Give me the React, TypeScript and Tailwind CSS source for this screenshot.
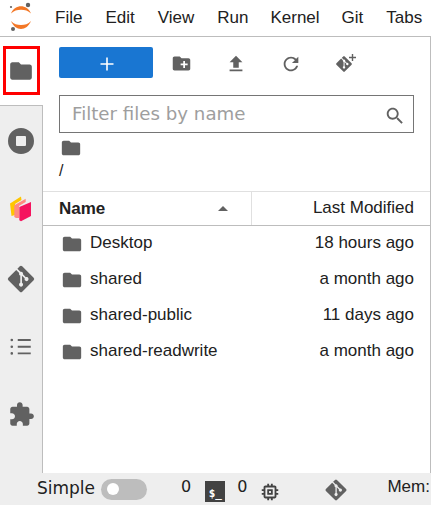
import React from "react";
import { FaGitAlt } from "react-icons/fa";

const FOLDER = "M10 4H4c-1.1 0-1.99.9-1.99 2L2 18c0 1.1.9 2 2 2h16c1.1 0 2-.9 2-2V8c0-1.1-.9-2-2-2h-8l-2-2z";

function Mat({ d, size = 24, className = "" }: { d: string; size?: number; className?: string }) {
  return (
    <svg width={size} height={size} viewBox="0 0 24 24" className={`shrink-0 fill-[#616161] ${className}`}>
      <path d={d} />
    </svg>
  );
}

function Logo() {
  return (
    <svg width="32" height="34" viewBox="0 0 32 34" className="shrink-0">
      <path d="M3 12.500C5 7.500 9 5.200 13 5.200s8 2.300 10 7.300C20 9.800 17 8.800 13 8.800S6 9.800 3 12.500z" fill="#f37726" />
      <path d="M3 20C6 23 9 24 13 24s7-1 10-4C21 25 17 28 13 28S5 25 3 20z" fill="#f37726" />
      <circle cx="20" cy="4" r="2.200" fill="#616161" />
      <circle cx="3" cy="6" r="1.100" fill="#616161" />
      <circle cx="5" cy="28" r="2" fill="#616161" />
    </svg>
  );
}

function Wandb() {
  return (
    <svg width="22" height="27" viewBox="0 0 22 27">
      <path d="M0 7.500 11 .5l.5 3.500L5 8v11l-3.500 1z" fill="#ffc600" />
      <path d="M4.300 9.300 15.700 2.700V6L9 10v12H6l-1.700-1z" fill="#ff8a80" />
      <path d="M9.300 11 21 6v14l-10 5.300-1.700-1z" fill="#f5145f" />
    </svg>
  );
}

function SideTab({ children, active }: { children: React.ReactNode; active?: boolean }) {
  return (
    <div
      className={
        active
          ? "h-[69px] w-[43px] bg-white flex items-center justify-center border-b border-[#bdbdbd]"
          : "h-[69px] w-[43px] flex items-center justify-center border-r border-[#bdbdbd]"
      }
    >
      {children}
    </div>
  );
}

function Row({ name, time }: { name: string; time: string }) {
  return (
    <div className="h-9 flex items-center pl-[2px] text-[17px] text-[#212121]">
      <Mat d={FOLDER} size={22} />
      <span className="ml-[7px] -mt-[3px]">{name}</span>
      <span className="ml-auto -mt-[3px]">{time}</span>
    </div>
  );
}

export default function App() {
  const menu: [string, string][] = [
    ["File", ""],
    ["Edit", "ml-[23px]"],
    ["View", "ml-[23px]"],
    ["Run", "ml-[23px]"],
    ["Kernel", "ml-[22px]"],
    ["Git", "ml-[22px]"],
    ["Tabs", "ml-[23px]"],
  ];
  return (
    <div className="relative w-[431px] h-[505px] overflow-hidden flex flex-col bg-white font-['Liberation_Sans',sans-serif]">
      <header className="h-[37px] shrink-0 flex items-center border-b border-[#bdbdbd] pl-[8px]">
        <Logo />
        <nav className="flex text-[17px] text-[#212121] -mt-[1px] ml-[15px]">
          {menu.map(([m, c]) => (
            <span key={m} className={c}>{m}</span>
          ))}
        </nav>
      </header>

      <div className="flex-1 flex min-h-0">
        <aside className="w-[43px] shrink-0 bg-[#eeeeee] flex flex-col">
          <SideTab active><Mat d={FOLDER} size={26} className="-mt-[1px] -ml-[2px]" /></SideTab>
          <SideTab>
            <svg width="26" height="26" viewBox="0 0 26 26">
              <path fillRule="evenodd" d="M13 0a13 13 0 1 0 0 26a13 13 0 0 0 0-26zM9 8h8a1 1 0 0 1 1 1v8a1 1 0 0 1-1 1H9a1 1 0 0 1-1-1V9a1 1 0 0 1 1-1z" fill="#616161" />
            </svg>
          </SideTab>
          <SideTab><Wandb /></SideTab>
          <SideTab><FaGitAlt size={30} color="#616161" /></SideTab>
          <SideTab>
            <Mat size={26} className="-mt-[2px]" d="M9 4.600h12v1.800H9zM9 10.800h12v1.800H9zM9 17h12v1.800H9zM3.500 4.300a1.200 1.200 0 1 1 0 2.400a1.200 1.200 0 0 1 0-2.400zM3.500 10.500a1.200 1.200 0 1 1 0 2.400a1.200 1.200 0 0 1 0-2.400zM3.500 16.700a1.200 1.200 0 1 1 0 2.400a1.200 1.200 0 0 1 0-2.400z" />
          </SideTab>
          <div className="flex-1 w-[43px] border-r border-[#bdbdbd] flex justify-center pt-[19px]">
            <Mat size={27} d="M20.500 11H19V7c0-1.100-.9-2-2-2h-4V3.500C13 2.120 11.880 1 10.500 1S8 2.120 8 3.500V5H4c-1.100 0-1.990.9-1.990 2v3.800H3.500c1.490 0 2.700 1.210 2.700 2.700s-1.210 2.700-2.700 2.700H2V20c0 1.100.9 2 2 2h3.800v-1.500c0-1.490 1.210-2.700 2.700-2.700 1.490 0 2.700 1.210 2.700 2.700V22H17c1.100 0 2-.9 2-2v-4h1.500c1.380 0 2.500-1.120 2.500-2.500S21.880 11 20.500 11z" />
          </div>
        </aside>

        <main className="flex-1 flex flex-col border-r border-[#bdbdbd] px-[16px]">
          <div className="h-[31px] mt-[10px] flex items-center shrink-0">
            <div className="w-[94px] h-[31px] rounded-[2px] bg-[#1976d2] flex items-center justify-center">
              <svg width="14" height="14" viewBox="0 0 14 14" className="mt-[2px] -mr-[1px]"><path d="M6.200 0.500h1.600v5.700h5.700v1.600H7.800v5.700H6.200V7.800H.5V6.200h5.700z" fill="#fff" /></svg>
            </div>
            <Mat size={21} className="ml-[18px] mt-[2px]" d="M20 6h-8l-2-2H4c-1.110 0-1.990.89-1.990 2L2 18c0 1.110.89 2 2 2h16c1.110 0 2-.89 2-2V8c0-1.110-.89-2-2-2zm-1 8h-3v3h-2v-3h-3v-2h3V9h2v3h3v2z" />
            <Mat size={22} className="ml-[33px] mt-[2px]" d="M9 16h6v-6h4l-7-7-7 7h4zm-4 2h14v2H5z" />
            <Mat size={22} className="ml-[33px] mt-[2px]" d="M17.650 6.350C16.200 4.900 14.210 4 12 4c-4.420 0-7.990 3.580-7.990 8s3.570 8 7.990 8c3.730 0 6.840-2.550 7.730-6h-2.080c-.82 2.330-3.040 4-5.650 4-3.310 0-6-2.690-6-6s2.690-6 6-6c1.660 0 3.140.69 4.220 1.780L13 11h7V4l-2.350 2.350z" />
            <div className="relative ml-[33px] w-[20px] h-[20px] mt-[1px]">
              <FaGitAlt size={18} color="#616161" className="absolute left-0 bottom-0" />
              <svg width="7" height="7" viewBox="0 0 7 7" className="absolute left-[14px] top-[1px]"><path d="M2.800 0h1.400v2.800H7v1.400H4.200V7H2.800V4.200H0V2.800h2.800z" fill="#616161" /></svg>
            </div>
          </div>

          <div className="h-[38px] mt-[17px] shrink-0 border border-[#757575] flex items-center pl-[12px] pr-[7px]">
            <span className="font-['DejaVu_Sans',sans-serif] text-[18.2px] text-[#9e9e9e]">Filter files by name</span>
            <Mat size={22} className="ml-auto mt-[4px]" d="M15.500 14h-.79l-.28-.27C15.410 12.590 16 11.110 16 9.500 16 5.910 13.090 3 9.500 3S3 5.910 3 9.500 5.910 16 9.500 16c1.610 0 3.090-.59 4.230-1.570l.27.28v.79l5 4.990L20.490 19l-4.990-5zm-6 0C7.010 14 5 11.990 5 9.500S7.010 5 9.500 5 14 7.010 14 9.500 11.990 14 9.500 14z" />
          </div>

          <div className="h-[22px] mt-[4px] flex items-center shrink-0">
            <Mat size={22} className="ml-[1px]" d={FOLDER} />
          </div>
          <div className="h-[24px] flex items-center text-[16px] text-[#212121] shrink-0">/</div>
          <div className="h-[35px] mt-[8px] -mx-[16px] px-[16px] shrink-0 flex items-center border-y border-y-[#e0e0e0] border-b-[#bdbdbd] text-[17px] text-[#212121]">
            <span className="font-bold w-[159px]">Name</span>
            <svg width="10" height="5" viewBox="0 0 12 6"><path d="M6 0l6 6H0z" fill="#616161" /></svg>
            <div className="ml-[23px] self-stretch border-l border-[#e0e0e0]" />
            <span className="ml-auto -mt-[1px]">Last Modified</span>
          </div>
          <Row name="Desktop" time="18 hours ago" />
          <Row name="shared" time="a month ago" />
          <Row name="shared-public" time="11 days ago" />
          <Row name="shared-readwrite" time="a month ago" />
        </main>
      </div>

      <footer className="h-[32px] shrink-0 bg-[#eeeeee] flex items-center relative text-[#212121]">
        <span className="ml-[37px] font-['DejaVu_Sans',sans-serif] text-[17px]">Simple</span>
        <div className="ml-[6px] w-[46px] h-[21px] rounded-full bg-[#bdbdbd] flex items-center pl-[6px]">
          <div className="w-[12px] h-[12px] rounded-full bg-white" />
        </div>
        <span className="ml-[34px] -mt-[5px] font-['DejaVu_Sans',sans-serif] text-[16px]">0</span>
        <div className="ml-[14px] mt-[4px] w-[20px] h-[21px] bg-[#424242] flex items-end justify-center">
          <span className="font-['DejaVu_Sans_Mono',monospace] text-[11px] font-bold leading-[16px] text-white">$_</span>
        </div>
        <span className="ml-[12px] -mt-[5px] font-['DejaVu_Sans',sans-serif] text-[16px]">0</span>
        <Mat size={22} className="ml-[12px] mt-[5px] fill-[#424242]!" d="M15 9H9v6h6V9zm-2 4h-2v-2h2v2zm8-2V9h-2V7c0-1.100-.9-2-2-2h-2V3h-2v2h-2V3H9v2H7c-1.100 0-2 .9-2 2v2H3v2h2v2H3v2h2v2c0 1.100.9 2 2 2h2v2h2v-2h2v2h2v-2h2c1.100 0 2-.9 2-2v-2h2v-2h-2v-2h2zm-4 6H7V7h10v10z" />
        <FaGitAlt size={24} color="#616161" className="ml-[43px] mt-[1px]" />
        <span className="ml-[39px] -mt-[5px] text-[17px] whitespace-nowrap">Mem:</span>
      </footer>

      <div className="absolute left-[3px] top-[46px] w-[37px] h-[49px] border-[3px] border-[#ff0000]" />
    </div>
  );
}
